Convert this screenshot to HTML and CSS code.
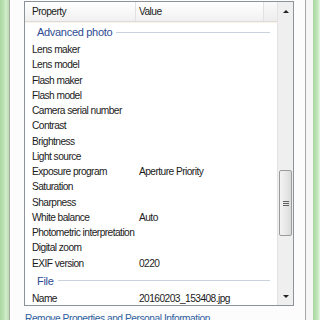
FILE: index.html
```html
<!DOCTYPE html>
<html>
<head>
<meta charset="utf-8">
<link rel="stylesheet" href="styles.css">
</head>
<body>
<div class="screen">
  <div class="edge-left"></div>
  <div class="window">
    <div class="list">
      <div class="table">
        <div class="header">
          <div class="hcell hprop">Property</div>
          <div class="hcell hval">Value</div>
          <div class="hcell hrest"></div>
        </div>
        <div class="group"><span class="gtitle">Advanced photo</span><span class="gline"></span></div>
        <div class="row"><span class="prop">Lens maker</span><span class="val"></span></div>
        <div class="row"><span class="prop">Lens model</span><span class="val"></span></div>
        <div class="row"><span class="prop">Flash maker</span><span class="val"></span></div>
        <div class="row"><span class="prop">Flash model</span><span class="val"></span></div>
        <div class="row"><span class="prop">Camera serial number</span><span class="val"></span></div>
        <div class="row"><span class="prop">Contrast</span><span class="val"></span></div>
        <div class="row"><span class="prop">Brightness</span><span class="val"></span></div>
        <div class="row"><span class="prop">Light source</span><span class="val"></span></div>
        <div class="row"><span class="prop">Exposure program</span><span class="val">Aperture Priority</span></div>
        <div class="row"><span class="prop">Saturation</span><span class="val"></span></div>
        <div class="row"><span class="prop">Sharpness</span><span class="val"></span></div>
        <div class="row"><span class="prop">White balance</span><span class="val">Auto</span></div>
        <div class="row"><span class="prop">Photometric interpretation</span><span class="val"></span></div>
        <div class="row"><span class="prop">Digital zoom</span><span class="val"></span></div>
        <div class="row"><span class="prop">EXIF version</span><span class="val">0220</span></div>
        <div class="group"><span class="gtitle">File</span><span class="gline"></span></div>
        <div class="row"><span class="prop">Name</span><span class="val">20160203_153408.jpg</span></div>
      </div>
      <div class="scrollbar">
        <div class="arrow up"></div>
        <div class="track">
          <div class="thumb"><span class="grip"></span></div>
        </div>
        <div class="arrow down"></div>
      </div>
    </div>
    <div class="link">Remove Properties and Personal Information</div>
  </div>
  <div class="edge-right"><div class="gap"></div><div class="green"></div></div>
</div>
</body>
</html>
```
FILE: styles.css
```css
html, body {
  margin: 0;
  padding: 0;
  width: 320px;
  height: 320px;
  overflow: hidden;
  background: #ffffff;
}
.screen {
  display: flex;
  width: 320px;
  height: 320px;
  font-family: "Liberation Sans", Arial, sans-serif;
  font-size: 10.2px;
  letter-spacing: -0.55px;
  color: #1b1b1b;
}
.edge-left {
  width: 9px;
  flex: none;
  background: linear-gradient(to right, #a9d6a0 0, #bfe3b6 4px, #d4eccd 6px, #b6dcae 9px);
}
.window {
  flex: 1;
  border-left: 1px solid #a8a8a8;
  border-right: 1px solid #a8a8a8;
  background: #fcfcfc;
  padding: 1px 11px 0 14px;
  display: flex;
  flex-direction: column;
  min-width: 0;
}
.list {
  height: 303px;
  flex: none;
  border: 1px solid #8e939a;
  background: #ffffff;
  display: flex;
  overflow: hidden;
}
.table {
  flex: 1;
  min-width: 0;
}
.header {
  display: flex;
  height: 19px;
  background: linear-gradient(to bottom, #ffffff 0, #f7f7f7 60%, #f0f0f0 100%);
  border-bottom: 1px solid #dcdcdc;
  box-shadow: 0 1px 0 #fbf3e6;
}
.hcell {
  line-height: 19px;
  white-space: nowrap;
}
.hprop {
  width: 103px;
  padding-left: 7px;
  border-right: 1px solid #e2e2e2;
}
.hval {
  width: 124px;
  padding-left: 3px;
  border-right: 1px solid #e2e2e2;
}
.hrest {
  flex: 1;
  background: linear-gradient(to bottom, #f9f9f9, #ededed);
}
.group {
  display: flex;
  align-items: center;
  height: 20px;
  padding-left: 12px;
  padding-right: 7px;
}
.gtitle {
  color: #2d4b92;
  font-size: 11px;
  letter-spacing: -0.3px;
  white-space: nowrap;
  padding-right: 4px;
}
.gline {
  flex: 1;
  height: 1px;
  background: #c9d2dd;
}
.row {
  display: grid;
  grid-template-columns: 107px auto;
  padding-left: 7px;
  height: 15.25px;
  line-height: 15.25px;
  white-space: nowrap;
}
.scrollbar {
  width: 15px;
  flex: none;
  background: #efefef;
  border-left: 1px solid #e3e3e3;
  display: flex;
  flex-direction: column;
}
.arrow {
  height: 18px;
  flex: none;
  display: flex;
  align-items: center;
  justify-content: center;
}
.arrow::before {
  content: "";
  width: 0;
  height: 0;
  border-left: 3px solid transparent;
  border-right: 3px solid transparent;
}
.up::before {
  border-bottom: 3px solid #222;
}
.down::before {
  border-top: 3px solid #222;
}
.track {
  flex: 1;
  padding-top: 150px;
}
.thumb {
  height: 66px;
  margin: 0 1px;
  border: 1px solid #9b9b9b;
  border-radius: 2px;
  background: linear-gradient(to right, #f3f3f3, #e6e6e6 60%, #d9d9d9);
  display: flex;
  align-items: center;
  justify-content: center;
  box-sizing: border-box;
}
.grip {
  width: 6px;
  height: 5px;
  background: repeating-linear-gradient(to bottom, #606060 0, #606060 1px, transparent 1px, transparent 2px);
}
.link {
  margin-top: 7px;
  padding-left: 1px;
  color: #30609e;
  font-size: 10.2px;
  letter-spacing: -0.45px;
  white-space: nowrap;
}
.edge-right {
  width: 14px;
  flex: none;
  display: flex;
}
.gap {
  width: 7px;
  background: #f6f6f6;
}
.green {
  flex: 1;
  background: linear-gradient(to right, #a6d89d 0, #b9e0b0 3px, #c9e9c2 5px, #e6f5e2 7px);
}
```
